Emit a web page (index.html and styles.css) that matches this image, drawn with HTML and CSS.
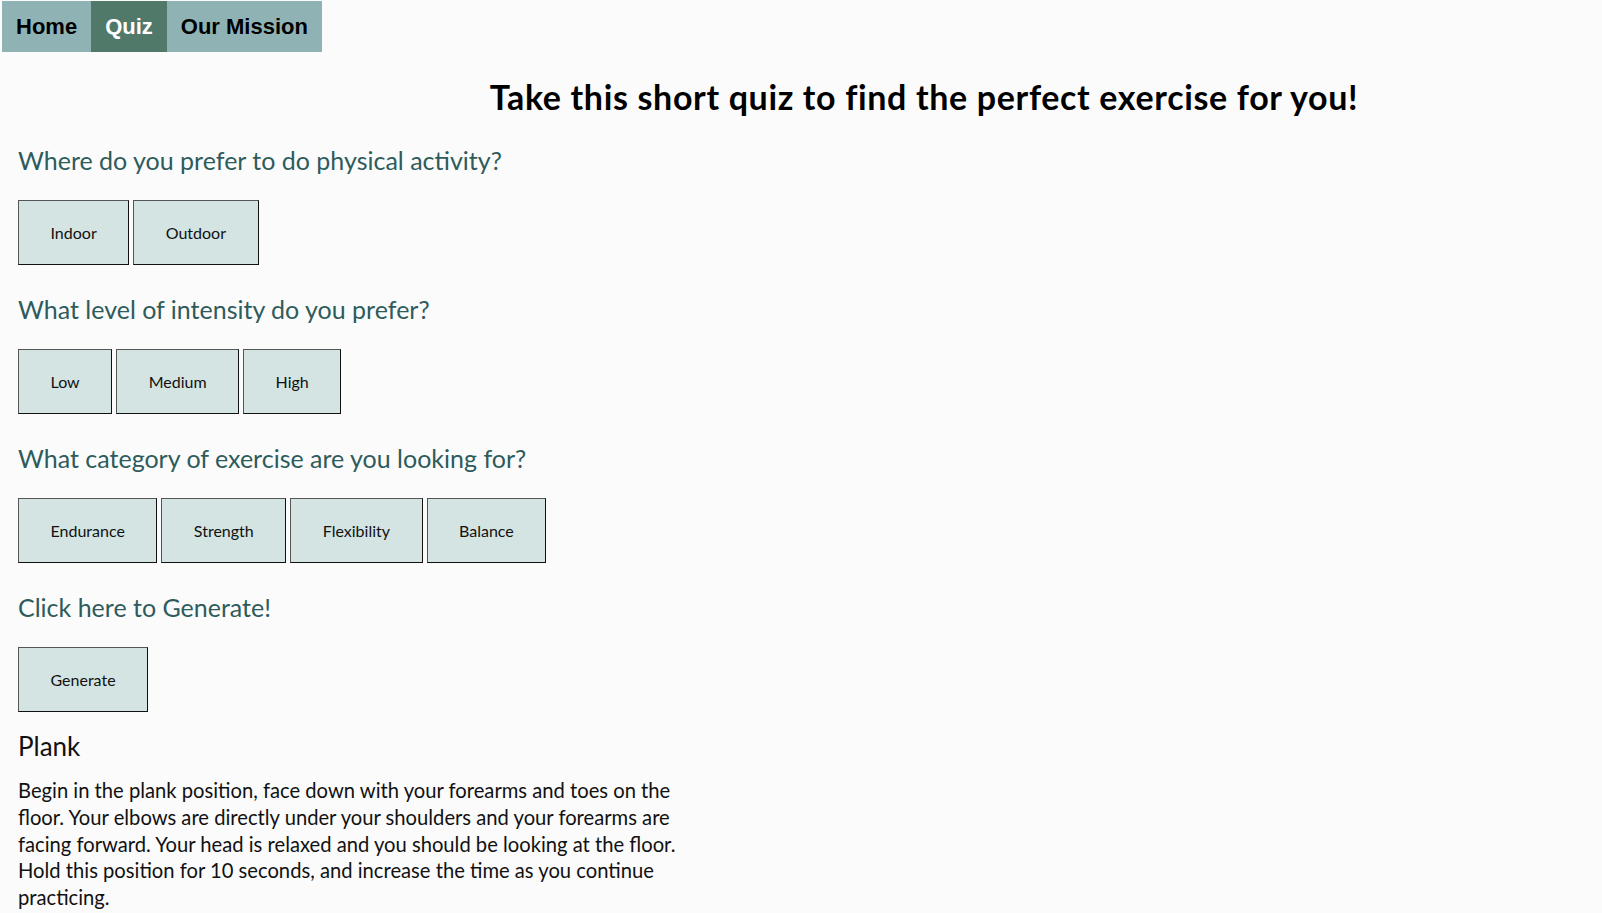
FILE: index.html
```html
<!DOCTYPE html>
<html lang="en">
<head>
<meta charset="utf-8">
<title>Quiz</title>
<link rel="stylesheet" href="styles.css">
</head>
<body>
<nav class="topnav">
  <a class="nav-link" href="#">Home</a>
  <a class="nav-link active" href="#">Quiz</a>
  <a class="nav-link" href="#">Our Mission</a>
</nav>
<h1 class="title">Take this short quiz to find the perfect exercise for you!</h1>
<main class="quiz">
  <section class="question">
    <h2 class="q-text">Where do you prefer to do physical activity?</h2>
    <div class="options">
      <button class="opt">Indoor</button>
      <button class="opt">Outdoor</button>
    </div>
  </section>
  <section class="question">
    <h2 class="q-text">What level of intensity do you prefer?</h2>
    <div class="options">
      <button class="opt">Low</button>
      <button class="opt">Medium</button>
      <button class="opt">High</button>
    </div>
  </section>
  <section class="question">
    <h2 class="q-text">What category of exercise are you looking for?</h2>
    <div class="options">
      <button class="opt">Endurance</button>
      <button class="opt">Strength</button>
      <button class="opt">Flexibility</button>
      <button class="opt">Balance</button>
    </div>
  </section>
  <section class="question">
    <h2 class="q-text">Click here to Generate!</h2>
    <div class="options">
      <button class="opt">Generate</button>
    </div>
  </section>
  <section class="result">
    <h3 class="result-title">Plank</h3>
    <p class="result-text">Begin in the plank position, face down with your forearms and toes on the floor. Your elbows are directly under your shoulders and your forearms are facing forward. Your head is relaxed and you should be looking at the floor. Hold this position for 10 seconds, and increase the time as you continue practicing.</p>
  </section>
</main>
</body>
</html>
```

FILE: styles.css
```css
html, body {
  margin: 0;
  padding: 0;
}

body {
  background: #fbfbfb;
  font-family: "Lato", "Open Sans", sans-serif;
  color: #111;
}

.topnav {
  display: flex;
  width: max-content;
  margin: 1px 0 0 2px;
  background: #8fb3b5;
}

.nav-link {
  display: block;
  height: 51px;
  line-height: 51px;
  padding: 0 14px;
  font-family: "Liberation Sans", Arial, sans-serif;
  font-weight: bold;
  font-size: 22px;
  color: #000;
  text-decoration: none;
}

.nav-link.active {
  background: #50796a;
  color: #fff;
}

.title {
  margin: 25px 0 0 0;
  padding-left: 246px;
  text-align: center;
  font-size: 34px;
  letter-spacing: 0.65px;
  line-height: 40px;
  font-weight: 700;
  color: #000;
}

.quiz {
  padding: 27px 0 0 18px;
}

.question {
  display: flex;
  flex-direction: column;
  align-items: flex-start;
  gap: 24px;
  margin-bottom: 28px;
}

.q-text {
  margin: 0;
  font-size: 25px;
  line-height: 32px;
  font-weight: 400;
  color: #2e5b5c;
}

.options {
  display: flex;
  gap: 4px;
}

.opt {
  font-family: "Lato", "Open Sans", sans-serif;
  font-size: 16px;
  line-height: 23px;
  padding: 20px 31.5px;
  background: #d4e4e3;
  color: #111;
  border: 1px solid;
  border-color: #555 #111 #111 #555;
  border-radius: 0;
}

.result {
  margin-top: -11px;
}

.result-title {
  margin: 0;
  font-size: 26px;
  line-height: 34px;
  font-weight: 400;
  color: #111;
}

.result-text {
  margin: 14px 0 0 0;
  max-width: 690px;
  font-size: 20.2px;
  line-height: 26.8px;
  color: #111;
}
```
